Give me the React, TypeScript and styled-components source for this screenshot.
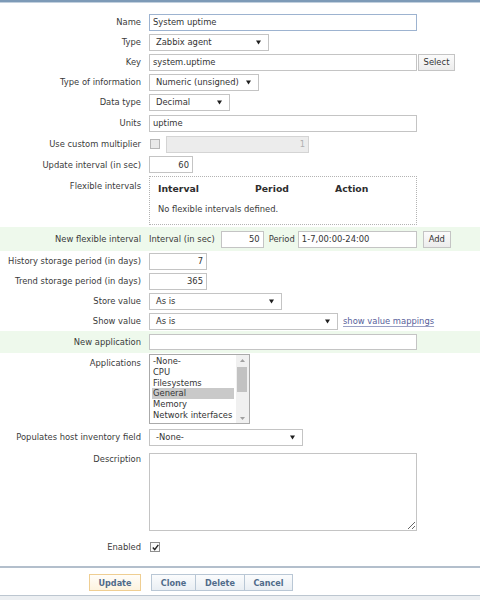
import React from 'react';
import styled, { createGlobalStyle } from 'styled-components';

const GlobalStyle = createGlobalStyle`
  html, body {
    margin: 0;
    padding: 0;
    background: #fff;
  }
  body {
    font-family: 'DejaVu Sans', Verdana, sans-serif;
    font-size: 8.4px;
    color: #3a3a3a;
  }
`;

const Page = styled.div`
  width: 480px;
  height: 600px;
  display: flex;
  flex-direction: column;
  overflow: hidden;
`;

const TopBar = styled.div`
  height: 1px;
  border-top: 2px solid #7d9ab7;
  background: #c2d0de;
`;

const Form = styled.div`
  display: flex;
  flex-direction: column;
  padding-top: 9px;
`;

type RowProps = { $h?: number; $green?: boolean; $top?: boolean; $pt?: number };

const Row = styled.div<RowProps>`
  display: grid;
  grid-template-columns: 141px 1fr;
  column-gap: 8px;
  align-items: ${(p) => (p.$top ? 'start' : 'center')};
  height: ${(p) => p.$h ?? 20}px;
  padding-top: ${(p) => p.$pt ?? 0}px;
  box-sizing: border-box;
  background: ${(p) => (p.$green ? '#eef9ec' : 'transparent')};
`;

const Label = styled.div<{ $pt?: number }>`
  text-align: right;
  line-height: 10px;
  white-space: nowrap;
  padding-top: ${(p) => p.$pt ?? 0}px;
`;

const Field = styled.div`
  display: flex;
  align-items: center;
  white-space: nowrap;
`;

const TextInput = styled.input<{ $w: number; $right?: boolean; $focus?: boolean }>`
  width: ${(p) => p.$w}px;
  height: 17px;
  box-sizing: border-box;
  margin: 0;
  padding: 0 3px;
  border: 1px solid ${(p) => (p.$focus ? '#9db3d0' : '#c4c4c4')};
  background: #fff;
  color: #333;
  font: inherit;
  text-align: ${(p) => (p.$right ? 'right' : 'left')};
  outline: none;

  &:disabled {
    background: #ececec;
    border-color: #d4d4d4;
    color: #b0b0b0;
  }
`;

const SelectBox = styled.div<{ $w: number }>`
  width: ${(p) => p.$w}px;
  height: 17px;
  box-sizing: border-box;
  display: flex;
  align-items: center;
  justify-content: space-between;
  padding: 0 7px 0 6px;
  border: 1px solid #c4c4c4;
  background: #fff;
  color: #333;
`;

const PlainButton = styled.button<{ $w: number; $ml?: number }>`
  width: ${(p) => p.$w}px;
  height: 17px;
  margin: 0 0 0 ${(p) => p.$ml ?? 0}px;
  padding: 0;
  border: 1px solid #c4c4c4;
  background: linear-gradient(#fbfbfb, #ececec);
  color: #333;
  font: inherit;
`;

const InlineText = styled.span<{ $ml?: number; $mr?: number }>`
  margin-left: ${(p) => p.$ml ?? 0}px;
  margin-right: ${(p) => p.$mr ?? 0}px;
`;

const Link = styled.a`
  margin-left: 5px;
  color: #56609a;
  text-decoration: underline;
  text-decoration-color: #9aa0c4;
  text-underline-offset: 2px;
`;

const CheckBox = styled.span<{ $checked?: boolean }>`
  width: 8px;
  height: 8px;
  display: inline-flex;
  align-items: center;
  justify-content: center;
  border: 1px solid ${(p) => (p.$checked ? '#8e8e8e' : '#b6b6b6')};
  background: ${(p) => (p.$checked ? '#fafafa' : '#e9e9e9')};
  margin-left: 1px;
`;

const FlexBox = styled.div`
  width: 268px;
  height: 49px;
  box-sizing: border-box;
  border: 1px dotted #b3b3b3;
  padding: 6px 0 0 8px;
`;

const FlexHead = styled.div`
  display: grid;
  grid-template-columns: 97px 80px 1fr;
  font-weight: bold;
  font-size: 9.3px;
  line-height: 11px;
  color: #2e2e2e;
`;

const FlexEmpty = styled.div`
  margin-top: 10px;
  line-height: 10px;
`;

const ListBox = styled.div`
  width: 101px;
  height: 70px;
  box-sizing: border-box;
  margin-top: 1px;
  border: 1px solid #aaaaaa;
  display: flex;
  background: #fff;
`;

const ListItems = styled.div`
  flex: 1;
  padding: 1px 2px 0 2px;
`;

const ListItem = styled.div<{ $selected?: boolean }>`
  height: 10.8px;
  line-height: 10.8px;
  padding-left: 1px;
  color: #333;
  background: ${(p) => (p.$selected ? '#c9c9c9' : 'transparent')};
`;

const ScrollTrack = styled.div`
  width: 13px;
  background: #f0f0f0;
  display: flex;
  flex-direction: column;
  align-items: center;
  justify-content: space-between;
  padding: 4px 0 3px;
  box-sizing: border-box;
  position: relative;
`;

const ScrollThumb = styled.div`
  position: absolute;
  top: 12px;
  left: 1px;
  width: 10px;
  height: 25px;
  background: #c2c2c2;
`;

const TextArea = styled.textarea`
  width: 268px;
  height: 78px;
  box-sizing: border-box;
  margin: 0;
  border: 1px solid #c4c4c4;
  font: inherit;
  resize: both;
  outline: none;
`;

const Footer = styled.footer`
  margin-top: auto;
  border-top: 2px solid #b3bfcc;
  border-bottom: 1px solid #bcc6d0;
  padding: 6px 0 4px 89px;
  display: flex;
  gap: 10px;
`;

const FooterBase = styled.div`
  height: 4px;
  background: #eceff2;
`;

const ButtonGroup = styled.div`
  display: flex;
`;

const ActionButton = styled.button<{ $w: number; $primary?: boolean }>`
  width: ${(p) => p.$w}px;
  height: 17px;
  margin: 0;
  padding: 0;
  font-family: inherit;
  font-size: 8.1px;
  font-weight: bold;
  color: #506b8a;
  border: 1px solid ${(p) => (p.$primary ? '#efce92' : '#b9c7d5')};
  background: ${(p) =>
    p.$primary ? 'linear-gradient(#fffdf9, #fdf3df)' : 'linear-gradient(#fbfcfd, #e9eef3)'};

  & + & {
    margin-left: -1px;
  }
`;

function Arrow() {
  return (
    <svg width="5" height="5" viewBox="0 0 5 5">
      <polygon points="0,0.5 5,0.5 2.5,4.5" fill="#1e1e1e" />
    </svg>
  );
}

function Tick() {
  return (
    <svg width="7" height="7" viewBox="0 0 7 7">
      <path d="M0.8 3.6 L2.7 5.6 L6.3 0.9" fill="none" stroke="#222" strokeWidth="1.4" />
    </svg>
  );
}

function ScrollArrow({ down }: { down?: boolean }) {
  return (
    <svg width="5" height="3" viewBox="0 0 5 3">
      <polygon points={down ? '0,0 5,0 2.5,3' : '0,3 5,3 2.5,0'} fill="#a0a0a0" />
    </svg>
  );
}

function Select({ w, value }: { w: number; value: string }) {
  return (
    <SelectBox $w={w}>
      <span>{value}</span>
      <Arrow />
    </SelectBox>
  );
}

const applications = ['-None-', 'CPU', 'Filesystems', 'General', 'Memory', 'Network interfaces'];

export default function App() {
  return (
    <Page>
      <GlobalStyle />
      <TopBar />
      <Form>
        <Row>
          <Label>Name</Label>
          <Field>
            <TextInput $w={268} $focus defaultValue="System uptime" />
          </Field>
        </Row>
        <Row>
          <Label>Type</Label>
          <Field>
            <Select w={120} value="Zabbix agent" />
          </Field>
        </Row>
        <Row>
          <Label>Key</Label>
          <Field>
            <TextInput $w={268} defaultValue="system.uptime" />
            <PlainButton $w={37} $ml={1}>Select</PlainButton>
          </Field>
        </Row>
        <Row>
          <Label>Type of information</Label>
          <Field>
            <Select w={110} value="Numeric (unsigned)" />
          </Field>
        </Row>
        <Row>
          <Label>Data type</Label>
          <Field>
            <Select w={81} value="Decimal" />
          </Field>
        </Row>
        <Row $h={21} $pt={1}>
          <Label>Units</Label>
          <Field>
            <TextInput $w={268} defaultValue="uptime" />
          </Field>
        </Row>
        <Row $h={21} $pt={1}>
          <Label>Use custom multiplier</Label>
          <Field>
            <CheckBox />
            <TextInput $w={143} $right disabled defaultValue="1" style={{ marginLeft: 6 }} />
          </Field>
        </Row>
        <Row $h={21}>
          <Label>Update interval (in sec)</Label>
          <Field>
            <TextInput $w={44} $right defaultValue="60" />
          </Field>
        </Row>
        <Row $h={52} $top $pt={1}>
          <Label $pt={5}>Flexible intervals</Label>
          <FlexBox>
            <FlexHead>
              <span>Interval</span>
              <span>Period</span>
              <span>Action</span>
            </FlexHead>
            <FlexEmpty>No flexible intervals defined.</FlexEmpty>
          </FlexBox>
        </Row>
        <Row $h={24} $green>
          <Label>New flexible interval</Label>
          <Field>
            <InlineText $mr={6}>Interval (in sec)</InlineText>
            <TextInput $w={43} $right defaultValue="50" />
            <InlineText $ml={5} $mr={3}>Period</InlineText>
            <TextInput $w={119} defaultValue="1-7,00:00-24:00" />
            <PlainButton $w={28} $ml={6}>Add</PlainButton>
          </Field>
        </Row>
        <Row>
          <Label>History storage period (in days)</Label>
          <Field>
            <TextInput $w={58} $right defaultValue="7" />
          </Field>
        </Row>
        <Row>
          <Label>Trend storage period (in days)</Label>
          <Field>
            <TextInput $w={58} $right defaultValue="365" />
          </Field>
        </Row>
        <Row>
          <Label>Store value</Label>
          <Field>
            <Select w={133} value="As is" />
          </Field>
        </Row>
        <Row>
          <Label>Show value</Label>
          <Field>
            <Select w={189} value="As is" />
            <Link>show value mappings</Link>
          </Field>
        </Row>
        <Row $h={22} $green>
          <Label>New application</Label>
          <Field>
            <TextInput $w={268} style={{ height: 16 }} />
          </Field>
        </Row>
        <Row $h={74} $top>
          <Label $pt={5}>Applications</Label>
          <ListBox>
            <ListItems>
              {applications.map((app) => (
                <ListItem key={app} $selected={app === 'General'}>
                  {app}
                </ListItem>
              ))}
            </ListItems>
            <ScrollTrack>
              <ScrollArrow />
              <ScrollThumb />
              <ScrollArrow down />
            </ScrollTrack>
          </ListBox>
        </Row>
        <Row>
          <Label>Populates host inventory field</Label>
          <Field>
            <Select w={154} value="-None-" />
          </Field>
        </Row>
        <Row $h={88} $top $pt={6}>
          <Label $pt={1}>Description</Label>
          <TextArea />
        </Row>
        <Row $h={24}>
          <Label>Enabled</Label>
          <Field>
            <CheckBox $checked>
              <Tick />
            </CheckBox>
          </Field>
        </Row>
      </Form>
      <Footer>
        <ActionButton $w={52} $primary>Update</ActionButton>
        <ButtonGroup>
          <ActionButton $w={45}>Clone</ActionButton>
          <ActionButton $w={50}>Delete</ActionButton>
          <ActionButton $w={49}>Cancel</ActionButton>
        </ButtonGroup>
      </Footer>
      <FooterBase />
    </Page>
  );
}
